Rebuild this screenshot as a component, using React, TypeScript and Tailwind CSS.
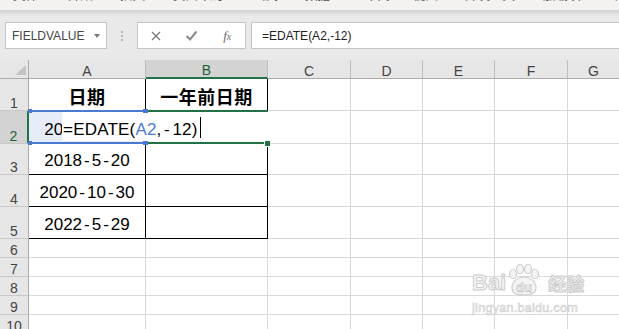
import React from 'react';

const cellFont = { fontFamily: '"Liberation Sans", "Noto Sans CJK SC", sans-serif' };
const uiFont = { fontFamily: '"Liberation Sans", "Noto Sans CJK SC", sans-serif' };

const letters = ['A', 'B', 'C', 'D', 'E', 'F', 'G'];
const rowNums = [1, 2, 3, 4, 5, 6, 7, 8, 9, 10];

const data: Record<string, string> = {
  A1: '日期',
  B1: '一年前日期',
  A2: '2019-5-20',
  A3: '2018-5-20',
  A4: '2020-10-30',
  A5: '2022-5-29',
};

const DateText: React.FC<{ v: string }> = ({ v }) => {
  const parts = v.split('-');
  return (
    <>
      {parts.map((p, i) => (
        <React.Fragment key={i}>
          {i > 0 && <span className="mx-[2px]">-</span>}
          {p}
        </React.Fragment>
      ))}
    </>
  );
};

const Ribbon: React.FC = () => (
  <div className="h-[10px] bg-[#f3f2f1] overflow-hidden" style={uiFont}>
    <div className="flex -mt-[10px] pl-[13px] text-[12.5px] leading-none text-[#555] whitespace-nowrap">
      <span className="w-[55px] shrink-0">文件</span>
      <span className="w-[52px] shrink-0">开始</span>
      <span className="w-[53px] shrink-0">插入</span>
      <span className="w-[80px] shrink-0">页面布局</span>
      <span className="w-[52px] shrink-0">公式</span>
      <span className="w-[60px] shrink-0">数据</span>
      <span className="w-[48px] shrink-0">审阅</span>
      <span className="w-[52px] shrink-0">视图</span>
      <span className="w-[78px] shrink-0">开发工具</span>
      <span className="w-[67px] shrink-0">加载项</span>
      <span className="shrink-0">帮助</span>
    </div>
  </div>
);

const FormulaBar: React.FC = () => (
  <div className="bg-[#e9e9e9]" style={uiFont}>
    <div className="h-[6px] bg-gradient-to-b from-[#d2d2d2] to-[#e9e9e9]" />
    <div className="h-[44px] flex items-start pt-[6px]">
      <div className="ml-[5px] w-[102px] h-[27px] bg-white border border-[#c6c6c6] flex items-center justify-between pl-[6px] pr-[6px]">
        <span className="text-[12px] text-[#444]">FIELDVALUE</span>
        <span className="w-0 h-0 border-l-[3.5px] border-r-[3.5px] border-t-[4px] border-l-transparent border-r-transparent border-t-[#7a7a7a]" />
      </div>
      <div className="w-[30px] h-[27px] flex flex-col items-center justify-center gap-[2px]">
        <span className="w-[2px] h-[2px] bg-[#b5b5b5]" />
        <span className="w-[2px] h-[2px] bg-[#b5b5b5]" />
        <span className="w-[2px] h-[2px] bg-[#b5b5b5]" />
      </div>
      <div className="w-[109px] h-[27px] bg-white border border-[#c6c6c6] flex items-center">
        <div className="w-[36px] flex justify-center">
          <svg width="10" height="10" viewBox="0 0 10 10">
            <path d="M1 1 L9 9 M9 1 L1 9" stroke="#7a7a7a" strokeWidth="1.3" fill="none" />
          </svg>
        </div>
        <div className="w-[36px] flex justify-center">
          <svg width="13" height="11" viewBox="0 0 13 11">
            <path d="M1.5 6 L5 9.5 L11.5 1.5" stroke="#8a8a8a" strokeWidth="2" fill="none" />
          </svg>
        </div>
        <div className="w-[36px] flex justify-center">
          <span className="italic text-[#6b6b6b] text-[13px] leading-none" style={{ fontFamily: '"Liberation Serif", serif' }}>
            f<span className="text-[10px]">x</span>
          </span>
        </div>
      </div>
      <div className="ml-[5px] flex-1 h-[27px] bg-white border border-r-0 border-[#c6c6c6] flex items-center pl-[10px]">
        <span className="text-[12px] text-[#222]">=EDATE(A2,-12)</span>
      </div>
    </div>
  </div>
);

const Paw: React.FC = () => (
  <svg width="40" height="32" viewBox="0 0 40 32" className="-ml-[2px]">
    <g fill="#f4f4f4" stroke="#cfcfcf" strokeWidth="1.2">
      <ellipse cx="9" cy="10" rx="3.5" ry="4.5" />
      <ellipse cx="16" cy="5" rx="3.5" ry="4.5" />
      <ellipse cx="24" cy="5" rx="3.5" ry="4.5" />
      <ellipse cx="31" cy="10" rx="3.5" ry="4.5" />
      <path d="M8 24 C8 17 14 13 20 13 C26 13 32 17 32 24 C32 29 28 31 20 31 C12 31 8 29 8 24 Z" />
    </g>
    <text x="20" y="28" textAnchor="middle" fontSize="13" fontWeight="bold" fill="#f4f4f4" stroke="#c9c9c9" strokeWidth="0.8" fontFamily="Liberation Sans, sans-serif">du</text>
  </svg>
);

const Watermark: React.FC = () => (
  <div className="absolute left-[472px] top-[204px] flex flex-col items-start pointer-events-none" style={uiFont}>
    <div className="flex items-end">
      <span className="text-[22px] font-bold leading-none text-[#f4f4f4] [-webkit-text-stroke:1px_#cdcdcd] mb-[2px]">Bai</span>
      <Paw />
      <span className="ml-[4px] text-[18px] font-bold leading-none text-[#f4f4f4] [-webkit-text-stroke:1px_#cdcdcd] mb-[2px]">经验</span>
    </div>
    <span className="mt-[6px] text-[12.5px] leading-none text-[#f2f2f2] [-webkit-text-stroke:0.6px_#cfcfcf] tracking-[0.3px]">jingyan.baidu.com</span>
  </div>
);

const Sheet: React.FC = () => {
  const cells: React.ReactNode[] = [];

  // header row
  cells.push(
    <div key="corner" className="bg-[#e6e6e6] border-r border-b border-r-[#ababab] border-b-[#ababab] relative">
      <span className="absolute right-[2px] bottom-[3px] w-0 h-0 border-l-[11px] border-t-[10px] border-l-transparent border-t-transparent border-r-0 border-b-0 [border-bottom:10px_solid_#c4c4c4]" />
    </div>
  );
  letters.forEach((l, i) => {
    const sel = l === 'B';
    cells.push(
      <div
        key={'h' + l}
        className={
          'flex items-end justify-center text-[14px] leading-none border-b ' +
          (i < 6 ? 'border-r border-r-[#bdbdbd] ' : '') +
          (sel ? 'bg-[#d3d3d3] text-[#1d5e37] border-b-2 border-b-[#217346]' : 'bg-[#e6e6e6] text-[#444] border-b-[#ababab]')
        }
      >
        <span>{l}</span>
      </div>
    );
  });

  rowNums.forEach(r => {
    const selRow = r === 2;
    cells.push(
      <div
        key={'r' + r}
        className={
          'flex items-end justify-center text-[14px] leading-none border-b border-b-[#c9c9c9] ' +
          (selRow ? 'bg-[#d3d3d3] text-[#1d5e37] border-r-2 border-r-[#217346]' : 'bg-[#e6e6e6] text-[#444] border-r border-r-[#ababab]')
        }
      >
        {r}
      </div>
    );
    letters.forEach((l, i) => {
      const id = l + r;
      const inTable = i <= 1 && r <= 5;
      const v = data[id];
      const isHead = r === 1;
      cells.push(
        <div
          key={id}
          className={
            'flex items-end justify-center border-b ' +
            (i < 6 ? 'border-r ' : '') +
            (inTable ? 'border-black ' : 'border-[#d9d9d9] ') +
            (id === 'A2' ? 'bg-[#e6edf8] ' : 'bg-white ')
          }
        >
          {v &&
            (isHead ? (
              <span className="text-[18px] font-bold leading-none tracking-[0.5px] text-black pb-[3px]">{v}</span>
            ) : (
              <span className="text-[17px] leading-none text-black pb-[5px] whitespace-nowrap">
                <DateText v={v} />
              </span>
            ))}
        </div>
      );
    });
  });

  return (
    <div className="relative flex-1 overflow-hidden bg-white" style={cellFont}>
      <div className="grid grid-cols-[29px_117px_122px_83px_72px_72px_73px_1fr] grid-rows-[19px_32px_33px_31px_32px_32px_19px_19px_19px_19px_19px]">
        {cells}
      </div>

      {/* in-cell editor for B2, spills over A2 */}
      <div className="absolute left-[62px] top-[52px] w-[206px] h-[29px] bg-white flex items-end">
        <span className="text-[17px] leading-none text-black pb-[3px] whitespace-nowrap pl-[1px] tracking-[0.2px]">
          =EDATE(<span className="text-[#4a7bd0]">A2</span>,<span className="mx-[2.5px]">-</span>12)
        </span>
        <span className="ml-[2px] mb-[3px] w-[1px] h-[21px] bg-black shrink-0" />
      </div>

      {/* reference box around A2 */}
      <div className="absolute left-[29px] top-[50px] w-[117px] h-[2px] bg-[#4a7bd0]" />
      <div className="absolute left-[29px] top-[82px] w-[117px] h-[2px] bg-[#4a7bd0]" />
      <div className="absolute left-[28px] top-[49px] w-[4px] h-[4px] bg-[#4a7bd0]" />
      <div className="absolute left-[143px] top-[49px] w-[5px] h-[4px] bg-[#4a7bd0]" />
      <div className="absolute left-[28px] top-[81px] w-[4px] h-[4px] bg-[#4a7bd0]" />
      <div className="absolute left-[143px] top-[81px] w-[5px] h-[4px] bg-[#4a7bd0]" />

      {/* active cell B2 */}
      <div className="absolute left-[148px] top-[50px] w-[120px] h-[2px] bg-[#217346]" />
      <div className="absolute left-[148px] top-[82px] w-[117px] h-[2px] bg-[#217346]" />
      <div className="absolute left-[265px] top-[81px] w-[5px] h-[5px] bg-[#217346] outline outline-1 outline-white" />

      <Watermark />
    </div>
  );
};

export default function App() {
  return (
    <div className="w-[619px] h-[329px] overflow-hidden flex flex-col bg-white">
      <Ribbon />
      <FormulaBar />
      <Sheet />
    </div>
  );
}
